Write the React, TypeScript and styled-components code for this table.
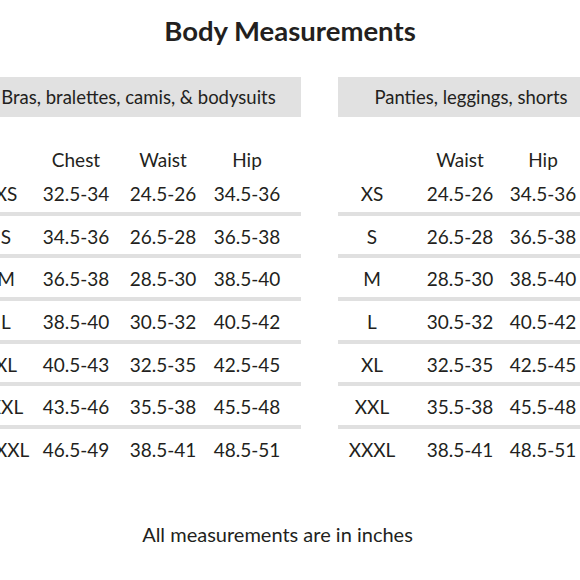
import styled, { createGlobalStyle } from "styled-components";

const GlobalStyle = createGlobalStyle`
  html, body {
    margin: 0;
    padding: 0;
    background: #ffffff;
  }
  body {
    font-family: Lato, "Open Sans", "Liberation Sans", sans-serif;
    color: #231f20;
  }
`;

const braRows = [
  ["XS", "32.5-34", "24.5-26", "34.5-36"],
  ["S", "34.5-36", "26.5-28", "36.5-38"],
  ["M", "36.5-38", "28.5-30", "38.5-40"],
  ["L", "38.5-40", "30.5-32", "40.5-42"],
  ["XL", "40.5-43", "32.5-35", "42.5-45"],
  ["XXL", "43.5-46", "35.5-38", "45.5-48"],
  ["XXXL", "46.5-49", "38.5-41", "48.5-51"],
];

const pantyRows = [
  ["XS", "24.5-26", "34.5-36"],
  ["S", "26.5-28", "36.5-38"],
  ["M", "28.5-30", "38.5-40"],
  ["L", "30.5-32", "40.5-42"],
  ["XL", "32.5-35", "42.5-45"],
  ["XXL", "35.5-38", "45.5-48"],
  ["XXXL", "38.5-41", "48.5-51"],
];

const SizeTable = ({ title, headers, rows, cols, width }: TableProps) => {
  return (
    <TableBlock $width={width}>
      <Band>{title}</Band>
      <HeaderRow $cols={cols}>
        {headers.map((h, i) => (
          <Cell key={i}>{h}</Cell>
        ))}
      </HeaderRow>
      {rows.map((r, i) => (
        <Row key={r[0]} $cols={cols} $isLast={i === rows.length - 1}>
          {r.map((v, j) => (
            <Cell key={j}>{v}</Cell>
          ))}
        </Row>
      ))}
    </TableBlock>
  );
};

const App = () => {
  return (
    <Page>
      <GlobalStyle />
      <Title>Body Measurements</Title>
      <Tables>
        <SizeTable
          title="Bras, bralettes, camis, & bodysuits"
          headers={["", "Chest", "Waist", "Hip"]}
          rows={braRows}
          cols="60px 80px 94px 74px 1fr"
          width={325}
        />
        <SizeTable
          title="Panties, leggings, shorts"
          headers={["", "Waist", "Hip"]}
          rows={pantyRows}
          cols="68px 108px 58px 1fr"
          width={266}
        />
      </Tables>
      <Footnote>All measurements are in inches</Footnote>
    </Page>
  );
};

export default App;

interface TableProps {
  title: string;
  headers: string[];
  rows: string[][];
  cols: string;
  width: number;
}

const Page = styled.div`
  width: 580px;
  height: 580px;
  overflow: hidden;
  display: flex;
  flex-direction: column;
`;

const Title = styled.h1`
  margin: 0;
  padding-top: 13px;
  margin-bottom: 28px;
  font-size: 27.5px;
  line-height: 36px;
  font-weight: 700;
  text-align: center;
  color: #231f20;
`;

const Tables = styled.div`
  display: flex;
  gap: 37px;
  margin-left: -24px;
`;

const TableBlock = styled.div<{ $width: number }>`
  flex: 0 0 ${({ $width }) => $width}px;
  display: flex;
  flex-direction: column;
`;

const Band = styled.div`
  height: 40px;
  display: flex;
  align-items: center;
  justify-content: center;
  background: #e1e1e1;
  font-size: 18.5px;
  white-space: nowrap;
`;

const HeaderRow = styled.div<{ $cols: string }>`
  display: grid;
  grid-template-columns: ${({ $cols }) => $cols};
  padding-top: 30px;
  line-height: 26px;
  font-size: 19px;
`;

const Row = styled.div<{ $cols: string; $isLast?: boolean }>`
  display: grid;
  grid-template-columns: ${({ $cols }) => $cols};
  padding-top: 6px;
  padding-bottom: 2.7px;
  line-height: 30px;
  font-size: 19px;
  border-bottom: 4px solid
    ${({ $isLast }) => ($isLast ? "transparent" : "#e0e0e0")};
`;

const Cell = styled.div`
  display: flex;
  justify-content: center;
  white-space: nowrap;
`;

const Footnote = styled.p`
  margin: 47px 0 0;
  padding-right: 25px;
  font-size: 20px;
  line-height: 30px;
  text-align: center;
`;
